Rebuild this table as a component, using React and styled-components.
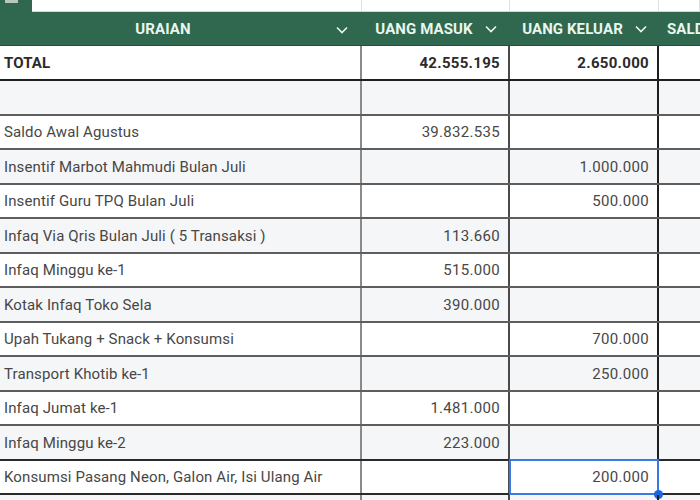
import React from "react";
import styled, { createGlobalStyle } from "styled-components";

const Global = createGlobalStyle`
  html, body { margin: 0; padding: 0; background: #fff; overflow: hidden; }
  body { font-family: Roboto, "Noto Sans", Arial, sans-serif; }
`;

const COLS = "362px 148px 149px 1fr";

const Sheet = styled.div`
  width: 700px;
  height: 500px;
  overflow: hidden;
  display: flex;
  flex-direction: column;
`;

const TopStrip = styled.div`
  display: grid;
  grid-template-columns: ${COLS};
  height: 12px;
  flex: none;
  box-sizing: border-box;
  border-bottom: 1px solid #d6d6d6;
`;

const TopCell = styled.div`
  position: relative;
  border-right: 1px solid #e2e2e2;
`;

const Tab = styled.div`
  position: absolute;
  left: 0;
  top: 0;
  width: 32px;
  height: 12px;
  background: #2f684e;
  &::after {
    content: "";
    position: absolute;
    left: 5px;
    top: 0;
    width: 13px;
    height: 3px;
    background: #b8c7bf;
  }
`;

const Header = styled.div`
  display: grid;
  grid-template-columns: ${COLS};
  height: 34px;
  flex: none;
  background: #2f684e;
  box-sizing: border-box;
  border-bottom: 1px solid #23503b;
`;

const HeadCell = styled.div`
  display: flex;
  align-items: center;
  justify-content: ${(p) => (p.$left ? "flex-start" : "center")};
  position: relative;
  padding: 0 ${(p) => p.$pr || 0}px 0 ${(p) => (p.$left ? 8 : 0)}px;
  color: #e9f6ef;
  font-weight: 700;
  font-size: 15px;
  letter-spacing: 0.1px;
  gap: 12px;
  white-space: nowrap;
`;

const Chevron = styled.svg`
  width: 12px;
  height: 8px;
  flex: none;
  ${(p) => p.$abs && "position: absolute; right: 14px; top: 14px;"}
`;

const Row = styled.div`
  display: grid;
  grid-template-columns: ${COLS};
  height: ${(p) => p.$h || 34.5}px;
  flex: none;
  box-sizing: border-box;
  background: ${(p) => (p.$shade ? "#f5f6f8" : "#ffffff")};
  border-bottom: 2px solid ${(p) => p.$line || "#5e5e5e"};
`;

const Cell = styled.div`
  position: relative;
  display: flex;
  align-items: center;
  justify-content: ${(p) => (p.$num ? "flex-end" : "flex-start")};
  padding: ${(p) => (p.$num ? "1px 8px 0 0" : "1px 0 0 4px")};
  box-sizing: border-box;
  font-size: 15px;
  letter-spacing: ${(p) => (p.$num ? "0.3px" : "0.12px")};
  color: ${(p) => (p.$bold ? "#2b2b2b" : "#474747")};
  font-weight: ${(p) => (p.$bold ? 700 : 400)};
  white-space: nowrap;
  border-right: 2px solid ${(p) => p.$edge || "transparent"};
`;

const Selection = styled.div`
  position: absolute;
  left: -1px;
  top: -2px;
  right: -2px;
  bottom: -2px;
  border: 2px solid #3b78e7;
  pointer-events: none;
  &::after {
    content: "";
    position: absolute;
    right: -6px;
    bottom: -6px;
    width: 9px;
    height: 9px;
    border-radius: 50%;
    background: #1a66e0;
  }
`;

const EDGES = ["#8a8a8a", "#4a4a4a", "#1e1e1e", "transparent"];

const Down = ({ abs }) => (
  <Chevron $abs={abs} viewBox="0 0 12 8">
    <path d="M1 1.5 L6 6.5 L11 1.5" fill="none" stroke="#e9f6ef" strokeWidth="1.6" />
  </Chevron>
);

const rows = [
  ["Saldo Awal Agustus", "39.832.535", ""],
  ["Insentif Marbot Mahmudi Bulan Juli", "", "1.000.000"],
  ["Insentif Guru TPQ Bulan Juli", "", "500.000"],
  ["Infaq Via Qris Bulan Juli ( 5 Transaksi )", "113.660", ""],
  ["Infaq Minggu ke-1", "515.000", ""],
  ["Kotak Infaq Toko Sela", "390.000", ""],
  ["Upah Tukang + Snack + Konsumsi", "", "700.000"],
  ["Transport Khotib ke-1", "", "250.000"],
  ["Infaq Jumat ke-1", "1.481.000", ""],
  ["Infaq Minggu ke-2", "223.000", ""],
  ["Konsumsi Pasang Neon, Galon Air, Isi Ulang Air", "", "200.000"],
  ["", "", ""],
];

export default function App() {
  return (
    <>
      <Global />
      <Sheet>
        <TopStrip>
          <TopCell>
            <Tab />
          </TopCell>
          <TopCell />
          <TopCell />
          <TopCell />
        </TopStrip>
        <Header>
          <HeadCell $pr={36}>
            URAIAN
            <Down abs />
          </HeadCell>
          <HeadCell>
            UANG MASUK
            <Down />
          </HeadCell>
          <HeadCell>
            UANG KELUAR
            <Down />
          </HeadCell>
          <HeadCell $left>SALDO</HeadCell>
        </Header>
        <Row $h={35} $line="#1f1f1f">
          <Cell $bold $edge={EDGES[0]}>TOTAL</Cell>
          <Cell $bold $num $edge={EDGES[1]}>42.555.195</Cell>
          <Cell $bold $num $edge={EDGES[2]}>2.650.000</Cell>
          <Cell />
        </Row>
        <Row $shade>
          <Cell $edge={EDGES[0]} />
          <Cell $edge={EDGES[1]} />
          <Cell $edge={EDGES[2]} />
          <Cell />
        </Row>
        {rows.map(([label, inn, out], i) => (
          <Row key={i} $shade={i % 2 === 1} $line={i >= 9 ? "#2a2a2a" : "#5e5e5e"}>
            <Cell $edge={EDGES[0]}>{label}</Cell>
            <Cell $num $edge={EDGES[1]}>{inn}</Cell>
            <Cell $num $edge={EDGES[2]}>
              {out}
              {i === 10 && <Selection />}
            </Cell>
            <Cell />
          </Row>
        ))}
      </Sheet>
    </>
  );
}
